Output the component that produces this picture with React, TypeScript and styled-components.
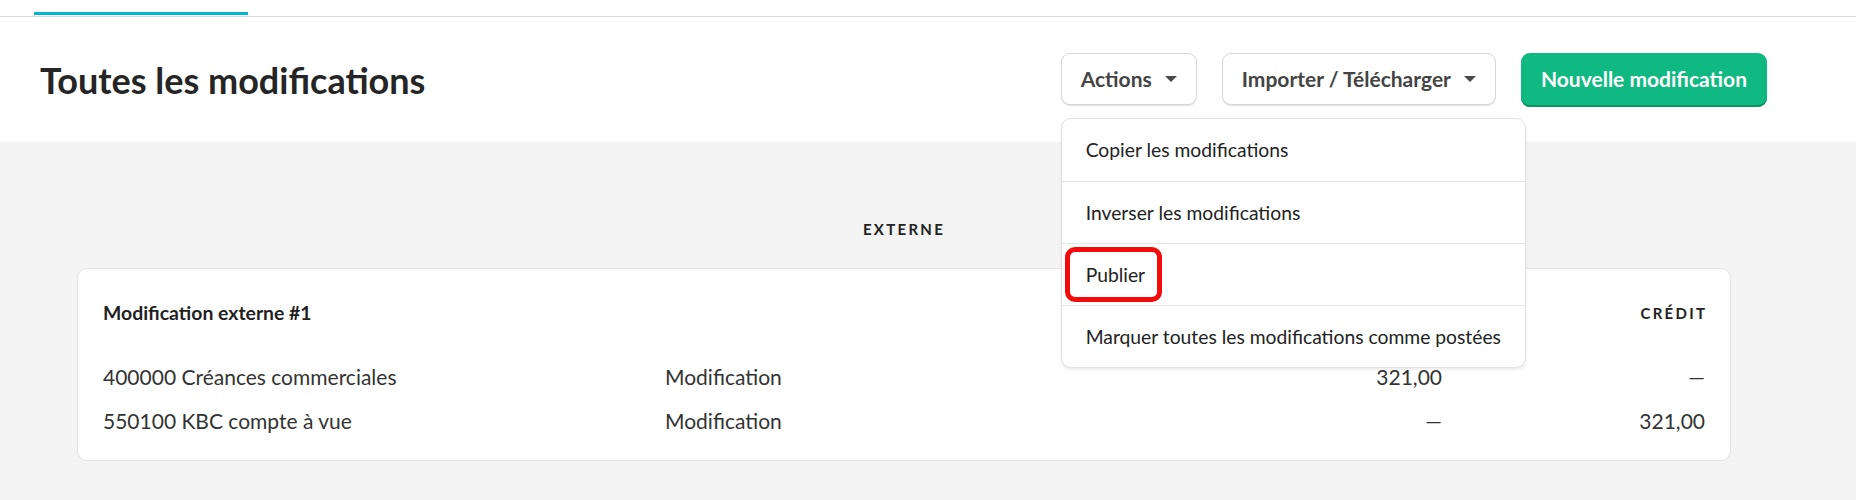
import React from "react";
import styled, { createGlobalStyle } from "styled-components";

const GlobalStyle = createGlobalStyle`
  html, body { margin: 0; padding: 0; background: #ffffff; }
  body { font-family: Lato, "Open Sans", Arial, sans-serif; color: #222; -webkit-font-smoothing: antialiased; }
  * { box-sizing: border-box; }
`;

const Page = styled.div`
  width: 1856px;
  min-height: 500px;
  background: #f4f4f4;
`;

const TabBar = styled.div`
  height: 17px;
  display: flex;
  align-items: flex-end;
  padding-left: 34px;
  background: #fff;
  border-bottom: 1px solid #d9d9d9;
`;

const ActiveTab = styled.div`
  width: 214px;
  height: 3px;
  margin-bottom: 1px;
  background: #00b5d1;
`;

const Header = styled.header`
  height: 125px;
  background: #fff;
  display: flex;
  align-items: center;
  justify-content: space-between;
  padding: 0 89px 0 40px;
`;

const Title = styled.h1`
  margin: 0;
  font-size: 36px;
  font-weight: 700;
  color: #252525;
`;

const Toolbar = styled.div`
  display: flex;
  align-items: flex-start;
  gap: 25px;
`;

const MenuAnchor = styled.div`
  position: relative;
`;

const DropButton = styled.button`
  height: 52px;
  display: flex;
  align-items: center;
  gap: 13px;
  padding: 0 19px;
  background: #fff;
  border: 1px solid #d8d8d8;
  border-radius: 9px;
  box-shadow: 0 1px 1px rgba(0, 0, 0, 0.12);
  font-family: inherit;
  font-size: 21px;
  font-weight: 700;
  color: #444;
  cursor: pointer;
`;

const Caret = styled.span`
  width: 0;
  height: 0;
  border-left: 6px solid transparent;
  border-right: 6px solid transparent;
  border-top: 6px solid #4a4a4a;
`;

const PrimaryButton = styled.button`
  height: 54px;
  padding: 0 20px 2px;
  background: #10b981;
  border: none;
  border-radius: 9px;
  box-shadow: inset 0 -2px 0 #0c9466;
  font-family: inherit;
  font-size: 21px;
  font-weight: 700;
  color: #fff;
  cursor: pointer;
`;

const Menu = styled.ul`
  position: absolute;
  top: 65px;
  left: 0;
  width: 465px;
  margin: 0;
  padding: 0;
  list-style: none;
  background: #fff;
  border: 1px solid #e2e2e2;
  border-radius: 10px;
  box-shadow: 0 2px 3px rgba(0, 0, 0, 0.08);
  z-index: 10;
`;

const MenuItem = styled.li`
  position: relative;
  height: 62px;
  display: flex;
  align-items: center;
  padding: 0 24px;
  font-size: 19.3px;
  color: #222;
  white-space: nowrap;
  & + & { border-top: 1px solid #e4e4e4; }
`;

const Highlight = styled.span`
  position: absolute;
  left: 3px;
  top: 3px;
  width: 97px;
  height: 55px;
  border: 5px solid #f50a0a;
  border-radius: 10px;
  pointer-events: none;
`;

const Section = styled.section`
  padding: 77px 125px 39px 77px;
  display: flex;
  flex-direction: column;
  gap: 29px;
`;

const SectionLabel = styled.div`
  text-align: center;
  font-size: 15px;
  line-height: 20px;
  font-weight: 700;
  letter-spacing: 2.3px;
  color: #222;
`;

const Card = styled.div`
  background: #fff;
  border: 1px solid #e3e3e3;
  border-radius: 10px;
  padding: 32px 25px 27px;
  display: grid;
  grid-template-columns: 562px 1fr 263px 263px;
  row-gap: 20px;
`;

const EntryTitle = styled.div`
  grid-column: 1 / 3;
  font-size: 19.4px;
  line-height: 24px;
  font-weight: 700;
  color: #1f1f1f;
  margin-bottom: 20px;
`;

const ColHead = styled.div`
  text-align: right;
  font-size: 15px;
  line-height: 24px;
  font-weight: 700;
  letter-spacing: 2.3px;
  margin-right: -2.3px;
  color: #222;
  margin-bottom: 20px;
`;

const Cell = styled.div<{ $num?: boolean }>`
  font-size: 21px;
  line-height: 24px;
  color: #333;
  text-align: ${(p) => (p.$num ? "right" : "left")};
`;

const rows = [
  { account: "400000 Créances commerciales", type: "Modification", debit: "321,00", credit: "—" },
  { account: "550100 KBC compte à vue", type: "Modification", debit: "—", credit: "321,00" },
];

export default function App() {
  return (
    <>
      <GlobalStyle />
      <Page>
        <TabBar>
          <ActiveTab />
        </TabBar>
        <Header>
          <Title>Toutes les modifications</Title>
          <Toolbar>
            <MenuAnchor>
              <DropButton>
                Actions <Caret />
              </DropButton>
              <Menu>
                <MenuItem>Copier les modifications</MenuItem>
                <MenuItem>Inverser les modifications</MenuItem>
                <MenuItem>
                  Publier
                  <Highlight />
                </MenuItem>
                <MenuItem>Marquer toutes les modifications comme postées</MenuItem>
              </Menu>
            </MenuAnchor>
            <DropButton>
              Importer / Télécharger <Caret />
            </DropButton>
            <PrimaryButton>Nouvelle modification</PrimaryButton>
          </Toolbar>
        </Header>
        <Section>
          <SectionLabel>EXTERNE</SectionLabel>
          <Card>
            <EntryTitle>Modification externe #1</EntryTitle>
            <ColHead>DÉBIT</ColHead>
            <ColHead>CRÉDIT</ColHead>
            {rows.map((r) => (
              <React.Fragment key={r.account}>
                <Cell>{r.account}</Cell>
                <Cell>{r.type}</Cell>
                <Cell $num>{r.debit}</Cell>
                <Cell $num>{r.credit}</Cell>
              </React.Fragment>
            ))}
          </Card>
        </Section>
      </Page>
    </>
  );
}
